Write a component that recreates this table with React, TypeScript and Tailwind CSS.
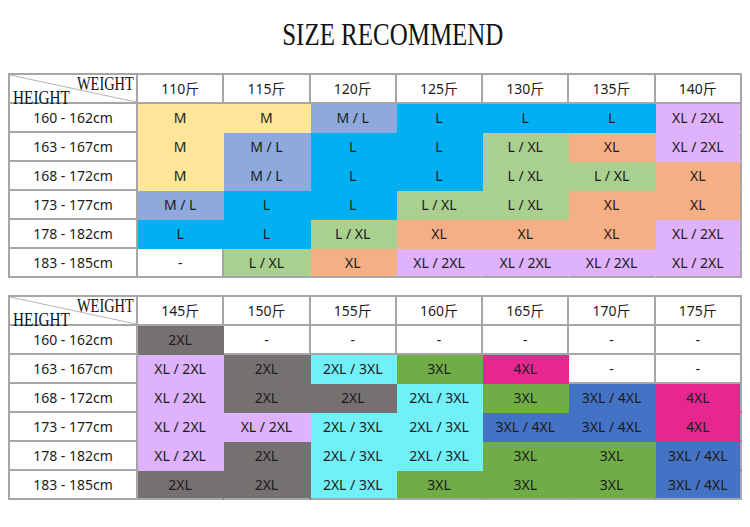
import React from "react";

type C = "w" | "y" | "p" | "b" | "g" | "o" | "l" | "k" | "c" | "G" | "m" | "B";

const COLORS: Record<C, { bg: string; r: string; b: string }> = {
  w: { bg: "bg-white", r: "border-r-[#a6a6a6]", b: "border-b-[#a6a6a6]" },
  y: { bg: "bg-[#ffe699]", r: "border-r-[#ffe699]", b: "border-b-[#ffe699]" },
  p: { bg: "bg-[#8ea9db]", r: "border-r-[#8ea9db]", b: "border-b-[#8ea9db]" },
  b: { bg: "bg-[#00b0f0]", r: "border-r-[#00b0f0]", b: "border-b-[#00b0f0]" },
  g: { bg: "bg-[#a9d08e]", r: "border-r-[#a9d08e]", b: "border-b-[#a9d08e]" },
  o: { bg: "bg-[#f4b084]", r: "border-r-[#f4b084]", b: "border-b-[#f4b084]" },
  l: { bg: "bg-[#dfb2fd]", r: "border-r-[#dfb2fd]", b: "border-b-[#dfb2fd]" },
  k: { bg: "bg-[#767171]", r: "border-r-[#767171]", b: "border-b-[#767171]" },
  c: { bg: "bg-[#72f0f8]", r: "border-r-[#72f0f8]", b: "border-b-[#72f0f8]" },
  G: { bg: "bg-[#70ad47]", r: "border-r-[#70ad47]", b: "border-b-[#70ad47]" },
  m: { bg: "bg-[#e6278f]", r: "border-r-[#e6278f]", b: "border-b-[#e6278f]" },
  B: { bg: "bg-[#4472c4]", r: "border-r-[#4472c4]", b: "border-b-[#4472c4]" },
};

const HEIGHTS = ["160 - 162cm", "163 - 167cm", "168 - 172cm", "173 - 177cm", "178 - 182cm", "183 - 185cm"];

const T1W = ["110斤", "115斤", "120斤", "125斤", "130斤", "135斤", "140斤"];
const T1: [string, C][][] = [
  [["M", "y"], ["M", "y"], ["M / L", "p"], ["L", "b"], ["L", "b"], ["L", "b"], ["XL / 2XL", "l"]],
  [["M", "y"], ["M / L", "p"], ["L", "b"], ["L", "b"], ["L / XL", "g"], ["XL", "o"], ["XL / 2XL", "l"]],
  [["M", "y"], ["M / L", "p"], ["L", "b"], ["L", "b"], ["L / XL", "g"], ["L / XL", "g"], ["XL", "o"]],
  [["M / L", "p"], ["L", "b"], ["L", "b"], ["L / XL", "g"], ["L / XL", "g"], ["XL", "o"], ["XL", "o"]],
  [["L", "b"], ["L", "b"], ["L / XL", "g"], ["XL", "o"], ["XL", "o"], ["XL", "o"], ["XL / 2XL", "l"]],
  [["-", "w"], ["L / XL", "g"], ["XL", "o"], ["XL / 2XL", "l"], ["XL / 2XL", "l"], ["XL / 2XL", "l"], ["XL / 2XL", "l"]],
];

const T2W = ["145斤", "150斤", "155斤", "160斤", "165斤", "170斤", "175斤"];
const T2: [string, C][][] = [
  [["2XL", "k"], ["-", "w"], ["-", "w"], ["-", "w"], ["-", "w"], ["-", "w"], ["-", "w"]],
  [["XL / 2XL", "l"], ["2XL", "k"], ["2XL / 3XL", "c"], ["3XL", "G"], ["4XL", "m"], ["-", "w"], ["-", "w"]],
  [["XL / 2XL", "l"], ["2XL", "k"], ["2XL", "k"], ["2XL / 3XL", "c"], ["3XL", "G"], ["3XL / 4XL", "B"], ["4XL", "m"]],
  [["XL / 2XL", "l"], ["XL / 2XL", "l"], ["2XL / 3XL", "c"], ["2XL / 3XL", "c"], ["3XL / 4XL", "B"], ["3XL / 4XL", "B"], ["4XL", "m"]],
  [["XL / 2XL", "l"], ["2XL", "k"], ["2XL / 3XL", "c"], ["2XL / 3XL", "c"], ["3XL", "G"], ["3XL", "G"], ["3XL / 4XL", "B"]],
  [["2XL", "k"], ["2XL", "k"], ["2XL / 3XL", "c"], ["3XL", "G"], ["3XL", "G"], ["3XL", "G"], ["3XL / 4XL", "B"]],
];

const SANS = "'Noto Sans', 'Noto Sans CJK SC', sans-serif";
const SERIF = "'Liberation Serif', 'Noto Sans CJK SC', serif";

function Cell({ text, color, lastCol, lastRow }: { text: string; color: C; lastCol: boolean; lastRow: boolean }) {
  const c = COLORS[color];
  const r = lastCol ? "border-r-[#a6a6a6]" : c.r;
  const b = lastRow ? "border-b-[#a6a6a6]" : c.b;
  return (
    <div className={`h-[29px] flex items-center justify-center border-r-2 border-b-2 ${c.bg} ${r} ${b} text-[14px] text-[#1c1c1c]`}>
      {text}
    </div>
  );
}

function SizeTable({ weights, data }: { weights: string[]; data: [string, C][][] }) {
  return (
    <div
      className="ml-2 w-[734px] border-l-2 border-t-2 border-[#a6a6a6] grid grid-cols-[128px_repeat(7,minmax(0,1fr))]"
      style={{ fontFamily: SANS }}
    >
      <div className="relative h-[29px] border-r-2 border-b-2 border-r-[#a6a6a6] border-b-[#a6a6a6] bg-white overflow-visible">
        <svg className="absolute inset-0 w-full h-full" preserveAspectRatio="none" viewBox="0 0 100 100">
          <line x1="0" y1="0" x2="100" y2="100" stroke="#b4b4b4" strokeWidth="1" vectorEffect="non-scaling-stroke" />
        </svg>
        <span
          className="absolute left-[67px] top-0 text-[18px] leading-none text-[#111] origin-left scale-x-[0.8]"
          style={{ fontFamily: SERIF }}
        >
          WEIGHT
        </span>
        <span
          className="absolute left-[3px] top-[14px] text-[18px] leading-none text-[#111] origin-left scale-x-[0.85]"
          style={{ fontFamily: SERIF }}
        >
          HEIGHT
        </span>
      </div>
      {weights.map((w, i) => (
        <div
          key={w}
          className={`h-[29px] flex items-center justify-center border-r-2 border-b-2 border-r-[#a6a6a6] border-b-[#a6a6a6] bg-white text-[14px] text-[#1c1c1c]`}
        >
          {w}
        </div>
      ))}
      {data.map((row, ri) => (
        <React.Fragment key={ri}>
          <div className="h-[29px] flex items-center justify-center border-r-2 border-b-2 border-r-[#a6a6a6] border-b-[#a6a6a6] bg-white text-[14px] text-[#1c1c1c]">
            {HEIGHTS[ri]}
          </div>
          {row.map(([t, c], ci) => (
            <Cell key={ci} text={t} color={c} lastCol={ci === row.length - 1} lastRow={ri === data.length - 1} />
          ))}
        </React.Fragment>
      ))}
    </div>
  );
}

export default function App() {
  return (
    <div className="w-[750px] h-[527px] bg-white overflow-hidden">
      <div className="pt-[14px] pl-[35px] flex justify-center">
        <span
          className="text-[32px] leading-[40px] text-[#111] scale-x-[0.78] whitespace-nowrap"
          style={{ fontFamily: SERIF }}
        >
          SIZE RECOMMEND
        </span>
      </div>
      <div className="mt-[19px]">
        <SizeTable weights={T1W} data={T1} />
      </div>
      <div className="mt-[17px]">
        <SizeTable weights={T2W} data={T2} />
      </div>
    </div>
  );
}
